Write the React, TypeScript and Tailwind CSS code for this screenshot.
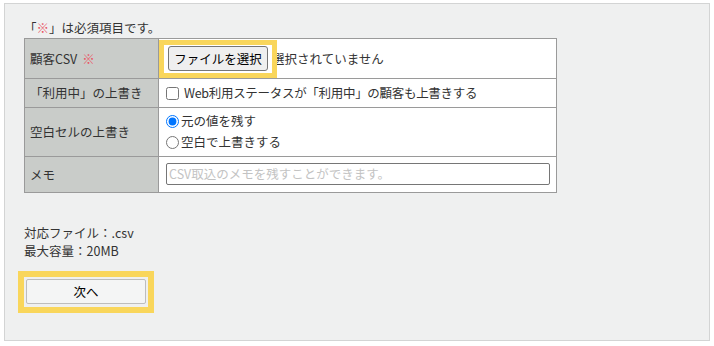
import React from "react";

const font = { fontFamily: '"Noto Sans CJK JP", "Noto Sans", sans-serif' };

export default function App() {
  return (
    <div className="w-[714px] h-[346px] bg-white pt-[3px] pl-[4px]" style={font}>
      <div className="w-[706px] h-[338px] bg-[#eff0f0] border border-[#d3d4d4] pt-[15px] pl-[19px] text-[12px] leading-[18px] text-[#333]">
        <div className="h-[19px] text-[12.5px]">
          「<span className="text-[#e95465]">※</span>」は必須項目です。
        </div>
        <div className="grid grid-cols-[134px_398px] w-[533px] border-l border-t border-[#9a9a9a] text-[12.5px]">
          {/* row 1 */}
          <div className="h-[40px] bg-[#c9ccc9] border-r border-b border-[#9a9a9a] flex items-center pl-[5px]">
            顧客CSV <span className="ml-[5px] text-[#e95465]">※</span>
          </div>
          <div className="h-[40px] bg-white border-r border-b border-[#9a9a9a] flex items-center pl-[9px]">
            <div className="relative">
              <div className="w-[100px] h-[25px] bg-[#efefef] border border-[#767676] rounded-[3px] flex items-center justify-center text-black">
                ファイルを選択
              </div>
              <div className="absolute left-[-9px] right-[-9px] top-[-6px] bottom-[-7px] border-[5px] border-[#f9d65b] z-10" />
            </div>
            <span className="ml-[4px] text-[#333]">選択されていません</span>
          </div>
          {/* row 2 */}
          <div className="h-[29px] bg-[#c9ccc9] border-r border-b border-[#9a9a9a] flex items-center pl-[5px]">
            「利用中」の上書き
          </div>
          <div className="h-[29px] bg-white border-r border-b border-[#9a9a9a] flex items-center pl-[7px]">
            <input type="checkbox" className="w-[13px] h-[13px] m-0" />
            <span className="ml-[5px] tracking-[-0.3px]">Web利用ステータスが「利用中」の顧客も上書きする</span>
          </div>
          {/* row 3 */}
          <div className="h-[49px] bg-[#c9ccc9] border-r border-b border-[#9a9a9a] flex items-center pl-[5px]">
            空白セルの上書き
          </div>
          <div className="h-[49px] bg-white border-r border-b border-[#9a9a9a] flex flex-col justify-center pl-[7px] pb-[1px]">
            <label className="flex items-center h-[21px]">
              <input type="radio" name="blank" defaultChecked className="w-[13px] h-[13px] m-0" />
              <span className="ml-[2px]">元の値を残す</span>
            </label>
            <label className="flex items-center h-[21px]">
              <input type="radio" name="blank" className="w-[13px] h-[13px] m-0" />
              <span className="ml-[2px]">空白で上書きする</span>
            </label>
          </div>
          {/* row 4 */}
          <div className="h-[36px] bg-[#c9ccc9] border-r border-b border-[#9a9a9a] flex items-center pl-[5px]">
            メモ
          </div>
          <div className="h-[36px] bg-white border-r border-b border-[#9a9a9a] flex items-center pl-[7px] pb-[2px]">
            <input
              type="text"
              placeholder="CSV取込のメモを残すことができます。"
              className="w-[384px] h-[22px] border border-[#767676] rounded-[2px] px-[2px] text-[12.5px] placeholder:text-[#c3c3c3] bg-white"
              style={font}
            />
          </div>
        </div>
        <div className="mt-[31px] text-[12.5px]">
          <div>対応ファイル：.csv</div>
          <div>最大容量：20MB</div>
        </div>
        <div className="mt-[19px] ml-[2px] relative w-[120px] text-[12.5px]">
          <div className="w-[120px] h-[25px] bg-[#f4f5f5] border border-[#bdbdbd] rounded-[2px] flex items-center justify-center text-black">
            次へ
          </div>
          <div className="absolute left-[-8px] right-[-8px] top-[-8px] bottom-[-9px] border-[6px] border-[#f9d65b]" />
        </div>
      </div>
    </div>
  );
}
